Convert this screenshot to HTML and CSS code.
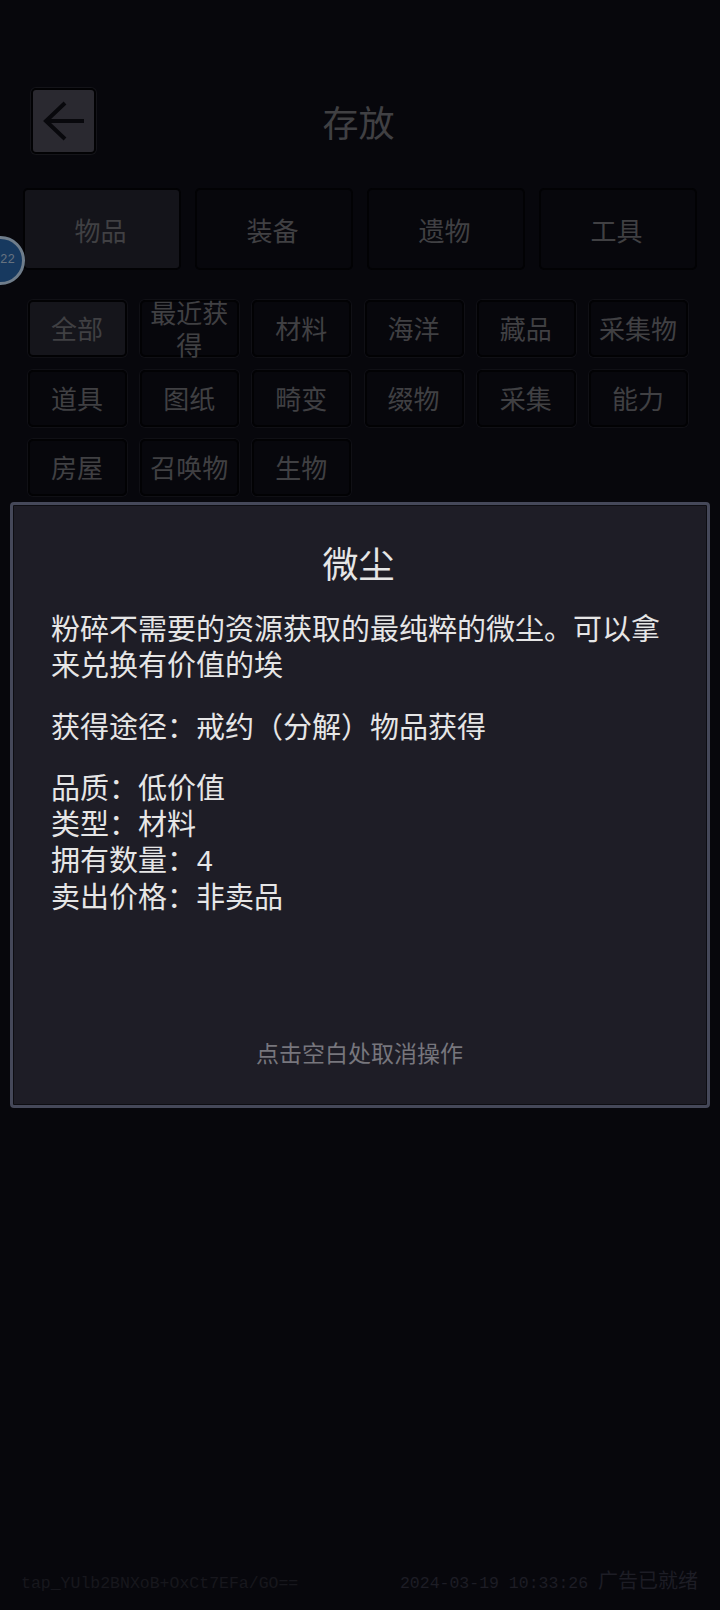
FILE: index.html
```html
<!DOCTYPE html>
<html lang="zh-CN">
<head>
    <meta charset="UTF-8">
    <meta name="viewport" content="width=device-width, initial-scale=1.0">
    <title>存放</title>
    <link rel="stylesheet" href="styles.css">
</head>
<body>

<div class="screen">
    <div class="header">
        <div class="back">
            <svg width="60" height="60" viewBox="0 0 60 60">
                <path d="M12 30 H50 M31 12 L12 30 L31 48" fill="none" stroke="#08080c" stroke-width="4"/>
            </svg>
        </div>
        <div class="title">存放</div>
    </div>

    <div class="tabs">
        <div class="tab active">物品</div>
        <div class="tab">装备</div>
        <div class="tab">遗物</div>
        <div class="tab">工具</div>
    </div>

    <div class="filters">
        <div class="filter active">全部</div>
        <div class="filter">最近获得</div>
        <div class="filter">材料</div>
        <div class="filter">海洋</div>
        <div class="filter">藏品</div>
        <div class="filter">采集物</div>
        <div class="filter">道具</div>
        <div class="filter">图纸</div>
        <div class="filter">畸变</div>
        <div class="filter">缀物</div>
        <div class="filter">采集</div>
        <div class="filter">能力</div>
        <div class="filter">房屋</div>
        <div class="filter">召唤物</div>
        <div class="filter">生物</div>
    </div>

    <div class="status">
        <span class="tap-id">tap_YUlb2BNXoB+OxCt7EFa/GO==</span>
        <span class="ad-state">2024-03-19 10:33:26 <span class="ad-text">广告已就绪</span></span>
    </div>

    <div class="badge">22</div>

    <div class="dialog">
        <div class="dialog-title">微尘</div>
        <p>粉碎不需要的资源获取的最纯粹的微尘。可以拿来兑换有价值的埃</p>
        <p>获得途径：戒约（分解）物品获得</p>
        <p>品质：低价值<br>类型：材料<br>拥有数量：4<br>卖出价格：非卖品</p>
        <div class="dialog-hint">点击空白处取消操作</div>
    </div>
</div>

</body>
</html>
```

FILE: styles.css
```css
body {
    margin: 0;
    background-color: #07070c;
    font-family: "Liberation Mono", "Noto Sans CJK SC", monospace;
}
.screen {
    position: relative;
    height: 1610px;
    overflow: hidden;
    display: flex;
    flex-direction: column;
    color: #404043;
}
.header {
    display: flex;
    align-items: center;
    height: 66px;
    margin: 88px 0 34px 31px;
}
.back {
    width: 61px;
    height: 62px;
    display: flex;
    align-items: center;
    justify-content: center;
    background: #2a2930;
    border: 2px solid #020204;
    border-radius: 5px;
    box-shadow: 0 0 0 1px #141419;
}
.title {
    flex: 1;
    padding-right: 99px;
    text-align: center;
    font-size: 36px;
}
.tabs {
    display: grid;
    grid-template-columns: repeat(4, 158px);
    column-gap: 14px;
    margin-left: 23px;
}
.tab {
    height: 82px;
    display: flex;
    align-items: center;
    justify-content: center;
    box-sizing: border-box;
    padding: 2px 3px 0 0;
    border: 2px solid #020204;
    border-radius: 5px;
    font-size: 26px;
}
.tab.active {
    background: #14141a;
}
.filters {
    display: grid;
    grid-template-columns: repeat(6, 99px);
    column-gap: 13.2px;
    row-gap: 12.5px;
    margin: 30px 0 0 28px;
}
.filter {
    height: 57px;
    display: flex;
    align-items: center;
    justify-content: center;
    box-sizing: border-box;
    padding: 7px 1px 0 0;
    border: 2px solid #020204;
    border-radius: 5px;
    box-shadow: 0 0 0 1px #101015;
    font-size: 26px;
    line-height: 32px;
    text-align: center;
}
.filter.active {
    background: #15151b;
}
.status {
    margin-top: auto;
    padding: 0 22px 14px 21px;
    display: flex;
    justify-content: space-between;
    align-items: baseline;
    font-size: 16.5px;
    line-height: 24px;
    color: #17171d;
}
.ad-state {
    color: #1d1d25;
}
.ad-text {
    font-size: 20px;
}
.badge {
    position: absolute;
    left: -24px;
    top: 236px;
    width: 36px;
    height: 43px;
    line-height: 43px;
    padding-right: 7px;
    text-align: right;
    border: 3px solid #6f7d8b;
    border-radius: 50%;
    background: #17395f;
    color: #66727f;
    font-size: 12.5px;
}
.dialog {
    position: absolute;
    left: 10px;
    top: 502px;
    width: 700px;
    height: 606px;
    box-sizing: border-box;
    display: flex;
    flex-direction: column;
    padding: 39px 44px 34px 38px;
    background: #1e1d26;
    border: 3px solid #454859;
    border-radius: 4px;
    box-shadow: inset 0 0 0 1px #0d0d12;
    color: #e6e6e6;
    font-size: 29px;
    line-height: 36.3px;
}
.dialog-title {
    text-align: center;
    padding-left: 3px;
    font-size: 36px;
    line-height: 50px;
    margin-bottom: 21px;
}
.dialog p {
    margin: 0 0 25px;
}
.dialog-hint {
    margin-top: auto;
    text-align: center;
    padding-left: 5px;
    font-size: 23px;
    line-height: 30px;
    color: #77767d;
}
```
